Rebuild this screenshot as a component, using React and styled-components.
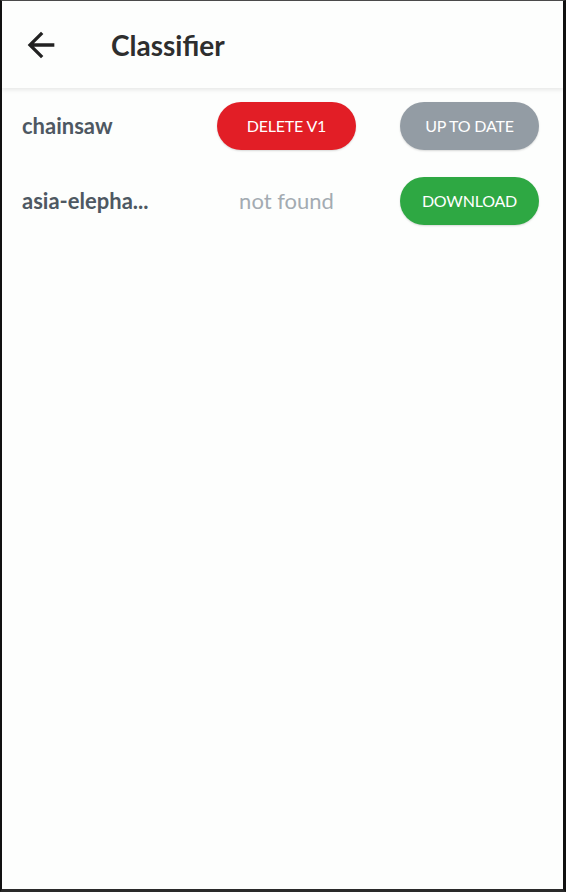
import React from "react";
import styled, { createGlobalStyle } from "styled-components";

const GlobalStyle = createGlobalStyle`
	html, body {
		margin: 0;
		padding: 0;
		background: #ffffff;
	}
	body {
		font-family: Lato, "Open Sans", sans-serif;
	}
`;

// Outer frame of the device capture
const Frame = styled.div`
	height: 892px;
	box-sizing: border-box;
	border-top: 1px solid #4a4a4a;
	border-left: 2px solid #111;
	border-right: 3px solid #111;
	border-bottom: 3px solid #2a2a2a;
	background: #fdfefd;
	display: flex;
	flex-direction: column;
	overflow: hidden;
`;

const Header = styled.header`
	height: 87px;
	flex-shrink: 0;
	display: flex;
	align-items: center;
	padding-left: 19px;
	background: #fdfefd;
	box-shadow: 0 2px 4px rgba(0, 0, 0, 0.09);
	position: relative;
	z-index: 1;
`;

const BackButton = styled.button`
	width: 40px;
	height: 40px;
	padding: 0;
	border: none;
	background: none;
	display: flex;
	align-items: center;
	justify-content: center;
	cursor: pointer;
	color: #222;
`;

const Title = styled.h1`
	margin: 0 0 0 50px;
	font-size: 28px;
	font-weight: 700;
	color: #2e2e2e;
`;

const List = styled.div`
	display: flex;
	flex-direction: column;
`;

const Row = styled.div`
	height: 75px;
	display: flex;
	align-items: center;
	padding: 0 24px 0 20px;
	gap: 44px;
`;

const Name = styled.span`
	flex: 1;
	font-size: 22px;
	font-weight: 700;
	color: #4e5862;
	white-space: nowrap;
	overflow: hidden;
`;

const Cell = styled.div`
	width: 139px;
	display: flex;
	justify-content: center;
	align-items: center;
`;

const Status = styled.span`
	font-size: 22px;
	color: #a3abb2;
`;

const colors = {
	red: "#e21e26",
	grey: "#939ca4",
	green: "#2ea843",
};

const Pill = styled.button`
	width: 139px;
	height: 48px;
	border: none;
	border-radius: 24px;
	background: ${(p) => colors[p.$tone]};
	color: #fff;
	font-family: Lato, sans-serif;
	font-size: 16px;
	font-weight: 400;
	letter-spacing: -0.2px;
	text-transform: uppercase;
	box-shadow: 0 1px 2px rgba(0, 0, 0, 0.15);
	cursor: pointer;
`;

const ArrowBack = () => (
	<svg width="40" height="40" viewBox="0 0 24 24" fill="currentColor">
		<path d="M20 11H7.83l5.59-5.59L12 4l-8 8 8 8 1.41-1.41L7.83 13H20v-2z" />
	</svg>
);

const models = [
	{ name: "chainsaw", action: { label: "Delete v1", tone: "red" }, status: { label: "Up to date", tone: "grey" } },
	{ name: "asia-elepha...", action: null, status: { label: "Download", tone: "green" } },
];

const App = () => {
	return (
		<>
			<GlobalStyle />
			<Frame>
				<Header>
					<BackButton>
						<ArrowBack />
					</BackButton>
					<Title>Classifier</Title>
				</Header>
				<List>
					{models.map((m) => (
						<Row key={m.name}>
							<Name>{m.name}</Name>
							<Cell>
								{m.action ? (
									<Pill $tone={m.action.tone}>{m.action.label}</Pill>
								) : (
									<Status>not found</Status>
								)}
							</Cell>
							<Cell>
								<Pill $tone={m.status.tone}>{m.status.label}</Pill>
							</Cell>
						</Row>
					))}
				</List>
			</Frame>
		</>
	);
};

export default App;
